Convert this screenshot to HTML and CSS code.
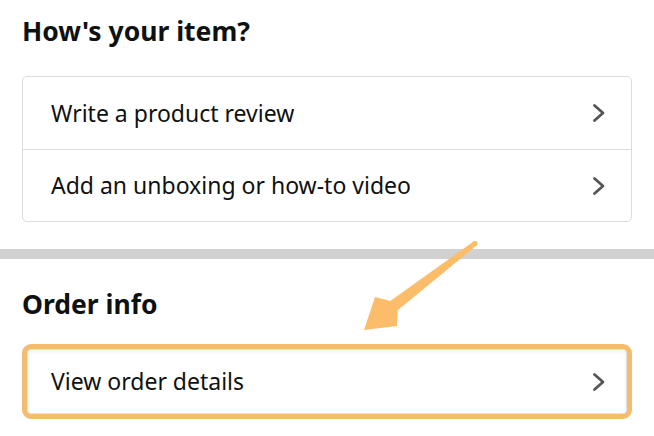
FILE: index.html
```html
<!DOCTYPE html>
<html lang="en">
<head>
<meta charset="utf-8">
<title>How's your item?</title>
<link rel="stylesheet" href="styles.css">
</head>
<body>
<div class="page">
  <section class="section section-top">
    <h2 class="heading">How's your item?</h2>
    <div class="card">
      <a class="row" href="#">
        <span class="row-label">Write a product review</span>
        <svg class="chev" viewBox="0 0 14 20" width="14" height="20" aria-hidden="true"><path d="M2.5 2.5 L11 10 L2.5 17.5" fill="none" stroke="#555" stroke-width="2.8" stroke-linecap="round" stroke-linejoin="round"/></svg>
      </a>
      <a class="row" href="#">
        <span class="row-label">Add an unboxing or how-to video</span>
        <svg class="chev" viewBox="0 0 14 20" width="14" height="20" aria-hidden="true"><path d="M2.5 2.5 L11 10 L2.5 17.5" fill="none" stroke="#555" stroke-width="2.8" stroke-linecap="round" stroke-linejoin="round"/></svg>
      </a>
    </div>
  </section>
  <div class="divider"></div>
  <section class="section section-bottom">
    <h2 class="heading">Order info</h2>
    <div class="highlight">
      <div class="card card-shadow">
        <a class="row" href="#">
          <span class="row-label">View order details</span>
          <svg class="chev" viewBox="0 0 14 20" width="14" height="20" aria-hidden="true"><path d="M2.5 2.5 L11 10 L2.5 17.5" fill="none" stroke="#555" stroke-width="2.8" stroke-linecap="round" stroke-linejoin="round"/></svg>
        </a>
      </div>
    </div>
  </section>
  <svg class="arrow" viewBox="0 0 654 436" width="654" height="436" aria-hidden="true">
    <polygon fill="#fbbd69" points="473.5,241.5 390.3,300.9 375,297 364,330 397,326 397.7,310.3 476.5,245.5"/>
    <circle cx="475" cy="243.5" r="2.6" fill="#fbbd69"/>
  </svg>
</div>
</body>
</html>
```
FILE: styles.css
```css
* { box-sizing: border-box; }
html, body { margin: 0; padding: 0; background: #fff; }
body {
  font-family: "Noto Sans", "Open Sans", Arial, sans-serif;
  color: #0f1111;
  width: 654px;
  height: 436px;
  overflow: hidden;
}
.page { position: relative; width: 654px; height: 436px; }
.section { padding: 0 22px 0 22px; }
.section-top { padding-top: 14px; padding-bottom: 27px; }
.section-bottom { padding-top: 28px; }
.heading {
  margin: 0;
  font-size: 26.5px;
  line-height: 34px;
  font-weight: 700;
  letter-spacing: 0;
}
.section-top .heading { margin-bottom: 28px; }
.section-bottom .heading { margin-bottom: 23px; }
.card {
  border: 1px solid #dcdcdc;
  border-radius: 5px;
  background: #fff;
}
.row {
  display: flex;
  align-items: center;
  justify-content: space-between;
  height: 72px;
  padding: 0 25px 0 28px;
  color: #0f1111;
  text-decoration: none;
}
.row + .row { border-top: 1px solid #dcdcdc; }
.row-label { font-size: 23px; line-height: 1; }
.chev { display: block; flex: none; }
.divider { height: 10px; background: #d1d1d1; }
.highlight {
  border: 5px solid #f4bc6e;
  border-radius: 9px;
  background: #f4bc6e;
}
.card-shadow {
  border-color: #e2e2e2;
  border-radius: 4px;
  box-shadow: inset 0 2px 4px rgba(0,0,0,0.06);
}
.card-shadow .row { height: 63px; padding-left: 23px; padding-right: 20px; }
.arrow { position: absolute; left: 0; top: 0; pointer-events: none; }
```
